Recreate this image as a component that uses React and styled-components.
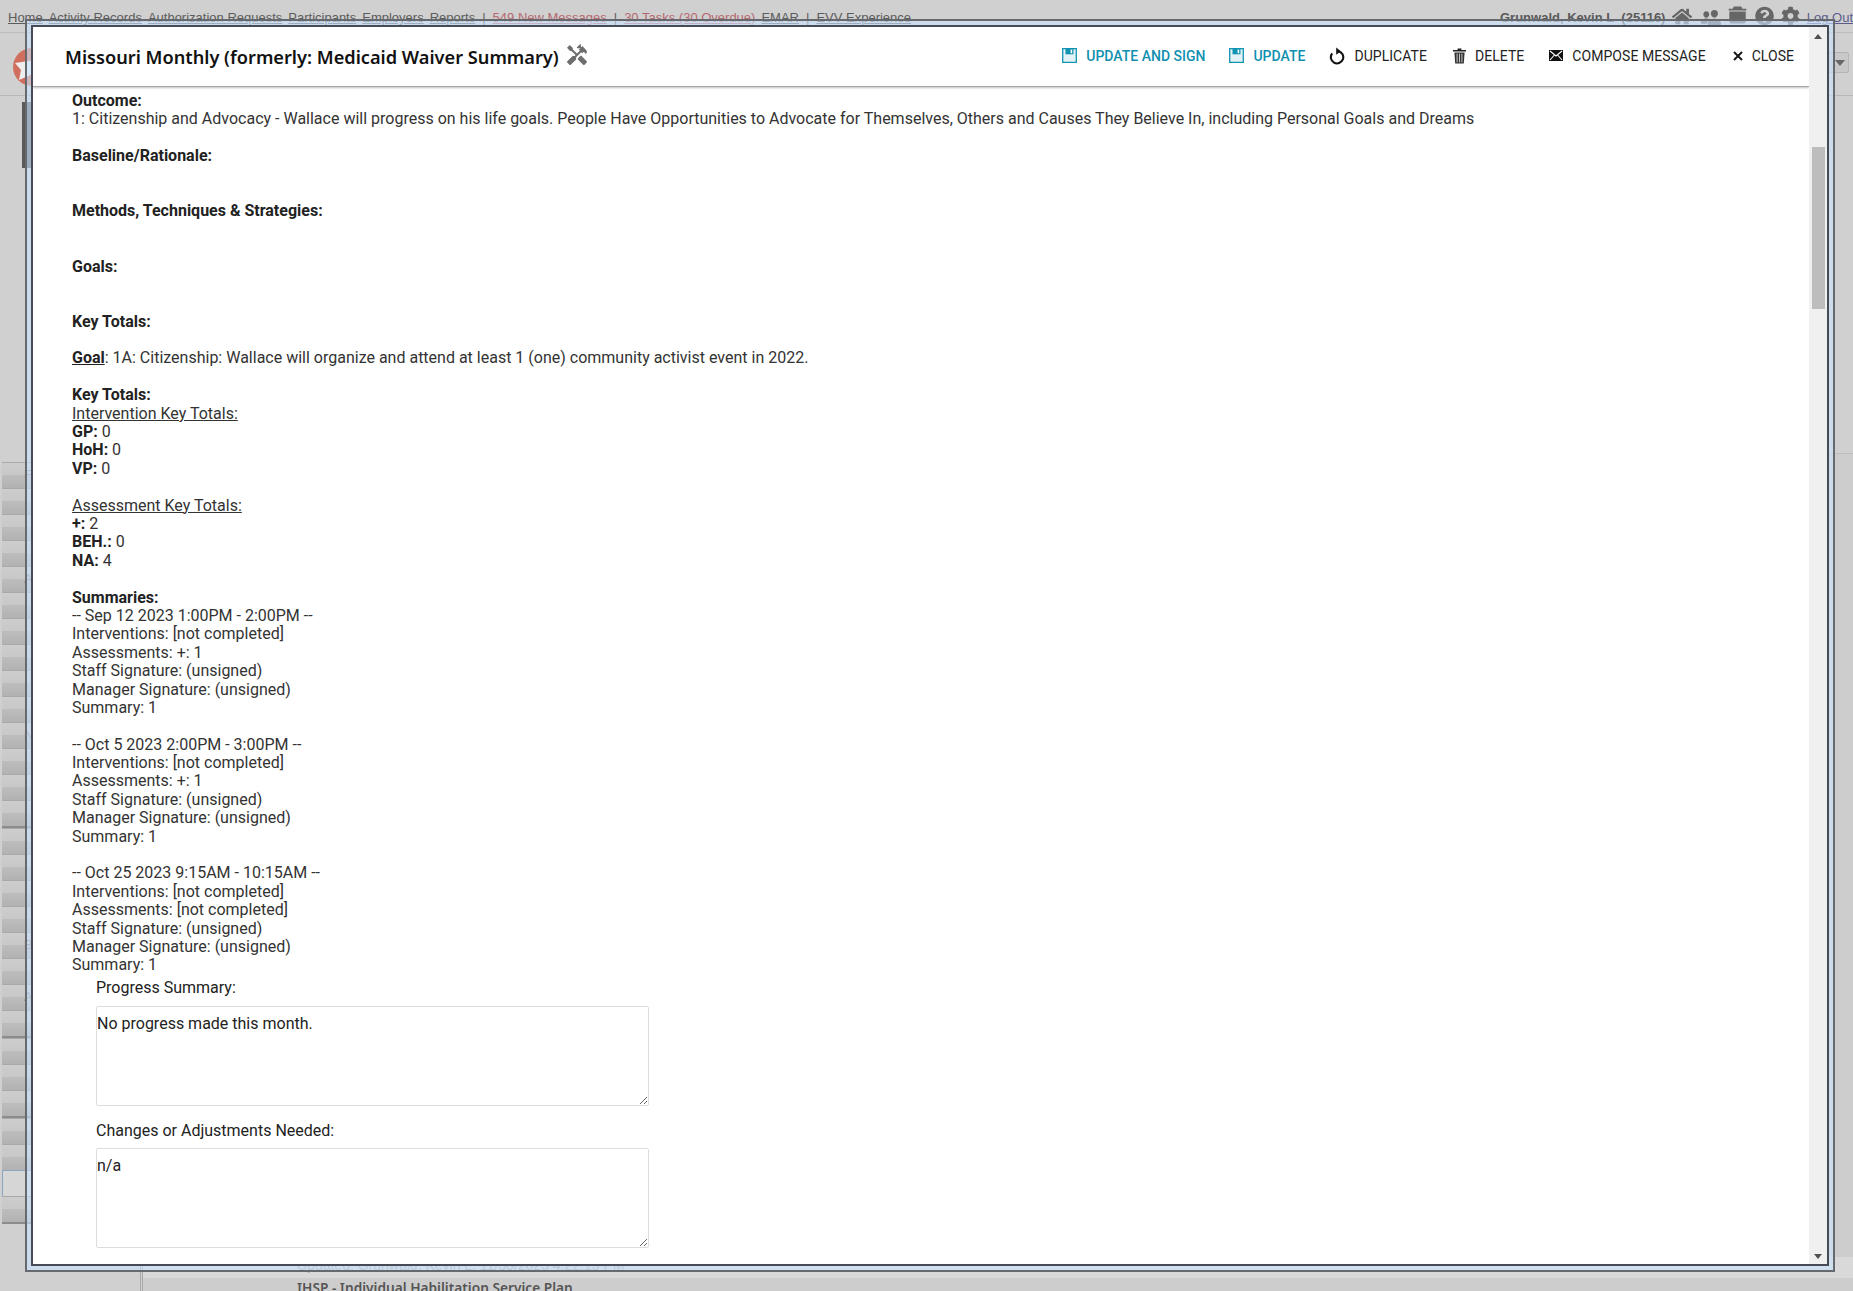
import React from "react";
import styled, { createGlobalStyle } from "styled-components";
import { MdHandyman } from "react-icons/md";
import { FaHome, FaQuestionCircle, FaCog } from "react-icons/fa";
import { IoPeople } from "react-icons/io5";

const GlobalStyle = createGlobalStyle`
  html, body {
    margin: 0;
    height: 100%;
    overflow: hidden;
    background: #d0d0d0;
  }
  * { box-sizing: border-box; }
`;

const SaveIcon = () => (
  <svg width="15" height="15" viewBox="0 0 15 15">
    <path d="M.7.7h13.6v13.6H.7z" fill="#e3f2f6" stroke="#1393b2" strokeWidth="1.3" />
    <path d="M3.5.7h8v5.6h-8z" fill="#1393b2" />
    <path d="M8.6 1.6h1.6v3.6H8.6z" fill="#fff" />
  </svg>
);

const DuplicateIcon = () => (
  <svg width="16" height="18" viewBox="0 0 16 18">
    <path d="M9.4 4.2a6.2 6.2 0 1 1-6.2 2.2" fill="none" stroke="#111" strokeWidth="2.1" />
    <path d="M7.2.6v7.2l4.6-3.6z" fill="#111" />
  </svg>
);

const TrashIcon = () => (
  <svg width="13" height="16" viewBox="0 0 13 16">
    <path d="M4.6.4h3.8v1.5H13v1.5H0V1.9h4.6z" fill="#222" />
    <path d="M1.4 4.4h10.2L10.8 15.6H2.2z" fill="#333" />
    <path d="M4.1 5.6v8.8M6.5 5.6v8.8M8.9 5.6v8.8" stroke="#ddd" strokeWidth=".9" />
  </svg>
);

const MailIcon = () => (
  <svg width="14" height="11" viewBox="0 0 14 11">
    <path d="M0 0h14v11H0z" fill="#111" />
    <path d="M1 1l6 5 6-5M1 10l4.4-5M13 10L8.6 5" fill="none" stroke="#fff" strokeWidth="1.1" />
  </svg>
);

const CloseIcon = () => (
  <svg width="10" height="10" viewBox="0 0 10 10">
    <path d="M1 1l8 8M9 1l-8 8" stroke="#111" strokeWidth="1.8" />
  </svg>
);

const CaseIcon = () => (
  <svg width="20" height="18" viewBox="0 0 20 18">
    <path d="M6 0h8l1 2.4h4.2v2H.8v-2H5z" fill="#666" />
    <path d="M1.4 5.4h17.2v10.4a2 2 0 0 1-2 2H3.4a2 2 0 0 1-2-2z" fill="#666" />
  </svg>
);

const actions = [
  { label: "Update and Sign", icon: <SaveIcon />, accent: true, space: 0 },
  { label: "Update", icon: <SaveIcon />, accent: true, space: 0 },
  { label: "Duplicate", icon: <DuplicateIcon />, space: 0 },
  { label: "Delete", icon: <TrashIcon />, space: 2 },
  { label: "Compose Message", icon: <MailIcon />, space: 1 },
  { label: "Close", icon: <CloseIcon />, space: 3 },
];

const navLinks = ["Home", "Activity Records", "Authorization Requests", "Participants", "Employers", "Reports"];

// rows down the left of the page behind the dialog
const sideRows = [
  "F", "I", "", "", "Ag", "", "", "", "", "", "N", "", "", "", "", "", "", "", "Be", "", "Ac",
  "", "", "", "", "", "", "", "",
];
const heavyRows = [13, 21, 24, 28];

export default function App() {
  return (
    <>
      <GlobalStyle />
      <Page>
        <NavBar>
          <NavLeft>
            {navLinks.map((l) => (
              <NavLink key={l}>{l}</NavLink>
            ))}
            <Sep>|</Sep>
            <NavLink $alert>549 New Messages</NavLink>
            <Sep>|</Sep>
            <NavLink $alert>30 Tasks (30 Overdue)</NavLink>
            <NavLink>EMAR</NavLink>
            <Sep>|</Sep>
            <NavLink>EVV Experience</NavLink>
          </NavLeft>
          <NavRight>
            <UserName>Grunwald, Kevin L&nbsp; (25116)</UserName>
            <FaHome size={21} />
            <IoPeople size={23} />
            <CaseIcon />
            <FaQuestionCircle size={20} />
            <FaCog size={20} />
            <LogOut>Log Out</LogOut>
          </NavRight>
        </NavBar>
        <BrandBar>
          <Logo>
            <svg width="38" height="38" viewBox="0 0 38 38">
              <circle cx="19" cy="19" r="19" fill="#d06f5e" />
              <path d="M2 15l20-3v13l-16 7 2-10z" fill="#eee" />
            </svg>
          </Logo>
          <SelectStub>
            <svg width="10" height="6" viewBox="0 0 10 6">
              <path d="M0 0h10L5 6z" fill="#666" />
            </svg>
          </SelectStub>
        </BrandBar>
        <Lower>
          <Side>
            <TitleBlock />
            <RowList>
              {sideRows.map((label, i) => (
                <SideRow key={i} $heavy={heavyRows.includes(i)} $picked={i === 27}>
                  {label}
                </SideRow>
              ))}
            </RowList>
          </Side>
          <Main>
            <PlanMeta>Updated: Grunwald, Kevin L, 11/30/2023 4:22:13 PM</PlanMeta>
            <PlanTitle>IHSP - Individual Habilitation Service Plan</PlanTitle>
          </Main>
        </Lower>
      </Page>

      <Dialog>
        <DialogInner>
          <DialogMain>
            <DialogHeader>
              <Title>
                Missouri Monthly (formerly: Medicaid Waiver Summary)
                <MdHandyman size={24} color="#6e6e6e" />
              </Title>
              <Actions>
                {actions.map((a) => (
                  <Action key={a.label} $accent={a.accent} $space={a.space}>
                    {a.icon}
                    <span>{a.label}</span>
                  </Action>
                ))}
              </Actions>
            </DialogHeader>
            <DialogBody>
              <Summary>
                <b>Outcome:</b>
                <br />
                1: Citizenship and Advocacy - Wallace will progress on his life goals. People Have Opportunities to
                Advocate for Themselves, Others and Causes They Believe In, including Personal Goals and Dreams
                <br />
                <br />
                <b>Baseline/Rationale:</b>
                <br />
                <br />
                <br />
                <b>Methods, Techniques &amp; Strategies:</b>
                <br />
                <br />
                <br />
                <b>Goals:</b>
                <br />
                <br />
                <br />
                <b>Key Totals:</b>
                <br />
                <br />
                <b>
                  <u>Goal</u>
                </b>
                : 1A: Citizenship: Wallace will organize and attend at least 1 (one) community activist event in 2022.
                <br />
                <br />
                <b>Key Totals:</b>
                <br />
                <u>Intervention Key Totals:</u>
                <br />
                <b>GP:</b> 0
                <br />
                <b>HoH:</b> 0
                <br />
                <b>VP:</b> 0
                <br />
                <br />
                <u>Assessment Key Totals:</u>
                <br />
                <b>+:</b> 2
                <br />
                <b>BEH.:</b> 0
                <br />
                <b>NA:</b> 4
                <br />
                <br />
                <b>Summaries:</b>
                <br />
                -- Sep 12 2023 1:00PM - 2:00PM --
                <br />
                Interventions: [not completed]
                <br />
                Assessments: +: 1
                <br />
                Staff Signature: (unsigned)
                <br />
                Manager Signature: (unsigned)
                <br />
                Summary: 1
                <br />
                <br />
                -- Oct 5 2023 2:00PM - 3:00PM --
                <br />
                Interventions: [not completed]
                <br />
                Assessments: +: 1
                <br />
                Staff Signature: (unsigned)
                <br />
                Manager Signature: (unsigned)
                <br />
                Summary: 1
                <br />
                <br />
                -- Oct 25 2023 9:15AM - 10:15AM --
                <br />
                Interventions: [not completed]
                <br />
                Assessments: [not completed]
                <br />
                Staff Signature: (unsigned)
                <br />
                Manager Signature: (unsigned)
                <br />
                Summary: 1
              </Summary>
              <Field>
                <FieldLabel>Progress Summary:</FieldLabel>
                <FieldInput defaultValue="No progress made this month." />
              </Field>
              <Field>
                <FieldLabel $tight>Changes or Adjustments Needed:</FieldLabel>
                <FieldInput defaultValue="n/a" />
              </Field>
            </DialogBody>
          </DialogMain>
          <ScrollTrack>
            <ScrollArrow viewBox="0 0 10 6">
              <path d="M0 6h10L5 0z" fill="#505050" />
            </ScrollArrow>
            <ScrollThumb />
            <ScrollArrow viewBox="0 0 10 6">
              <path d="M0 0h10L5 6z" fill="#505050" />
            </ScrollArrow>
          </ScrollTrack>
        </DialogInner>
      </Dialog>
    </>
  );
}

const Page = styled.div`
  height: 1291px;
  overflow: hidden;
  display: flex;
  flex-direction: column;
  background: #d0d0d0;
  font-family: "Liberation Sans", Arial, sans-serif;
  color: #5c5c5c;
`;

const NavBar = styled.div`
  height: 33px;
  flex: none;
  display: flex;
  justify-content: space-between;
  padding: 10px 0 0 8px;
  border-bottom: 1px solid #bcbcbc;
  font-size: 13px;
  white-space: nowrap;
  line-height: 16px;
`;

const NavLeft = styled.div`
  display: flex;
  gap: 6px;
`;

const NavLink = styled.span`
  text-decoration: underline;
  color: ${(p) => (p.$alert ? "#b5686e" : "#5c5c5c")};
`;

const Sep = styled.span`
  margin: 0 1px;
`;

const NavRight = styled.div`
  display: flex;
  align-items: flex-start;
  gap: 7px;
  width: 353px;
  flex: none;
  margin-top: -4px;
  color: #666;
  overflow: hidden;
`;

const UserName = styled.span`
  margin-top: 4px;
  font-weight: 700;
  color: #5a5a5a;
`;

const LogOut = styled.span`
  margin-top: 4px;
  text-decoration: underline;
  color: #5c5c8c;
`;

const BrandBar = styled.div`
  height: 63px;
  flex: none;
  display: flex;
  justify-content: space-between;
  align-items: flex-start;
  padding: 15px 4px 0 13px;
  border-bottom: 1px solid #b8b8b8;
`;

const Logo = styled.div`
  width: 38px;
  height: 38px;
`;

const SelectStub = styled.div`
  width: 40px;
  height: 21px;
  margin-top: 4px;
  display: flex;
  align-items: center;
  justify-content: flex-end;
  padding-right: 3px;
  background: #c8c8c8;
  border: 1px solid #b4b4b4;
  border-radius: 2px;
`;

const Lower = styled.div`
  flex: 1;
  display: flex;
`;

const Side = styled.div`
  width: 143px;
  flex: none;
  padding: 6px 0 0 2px;
  border-right: 3px double #a8a8a8;
`;

const TitleBlock = styled.div`
  width: 34px;
  height: 66px;
  margin-left: 20px;
  background: #5a5a5a;
`;

const RowList = styled.div`
  margin-top: 294px;
  width: 40px;
`;

const SideRow = styled.div`
  height: ${(p) => (p.$heavy ? "28px" : "26px")};
  padding: 4px 0 0 22px;
  font-size: 13px;
  color: #8a8a8a;
  overflow: hidden;
  background: ${(p) =>
    p.$picked ? "#d6d6d6" : "linear-gradient(#cdcdcd, #c8c8c8 48%, #bdbdbd 48%, #b2b2b2 100%)"};
  border: ${(p) => (p.$picked ? "1px solid #8aa6c0" : "0")};
  border-top: 1px solid ${(p) => (p.$picked ? "#8aa6c0" : "#a9a9a9")};
  border-bottom: ${(p) => (p.$heavy ? "2px solid #8c8c8c" : "0")};
`;

const Main = styled.div`
  flex: 1;
  margin-top: 357px;
  padding-top: 803px;
  background: #cdcdcd;
  border-top: 1px solid #bdbdbd;
`;

const PlanMeta = styled.div`
  padding: 0 0 5px 154px;
  font-size: 14px;
  color: #a4a4a4;
  line-height: 16px;
  background: #d9d9d9;
`;

const PlanTitle = styled.div`
  margin-top: 1px;
  padding-left: 154px;
  font-family: "Noto Sans", sans-serif;
  font-size: 13.7px;
  font-weight: 600;
  color: #555;
  line-height: 17px;
`;

const Dialog = styled.div`
  position: fixed;
  left: 25px;
  top: 19px;
  width: 1810px;
  height: 1253px;
  padding: 4px;
  background: rgba(203, 228, 255, 0.6);
  border: 2px solid #66696e;
`;

const DialogInner = styled.div`
  width: 100%;
  height: 100%;
  display: flex;
  background: #fff;
  border: 2px solid #474b55;
  overflow: hidden;
`;

const DialogMain = styled.div`
  flex: 1;
  min-width: 0;
  display: flex;
  flex-direction: column;
`;

const DialogHeader = styled.div`
  height: 60px;
  flex: none;
  display: flex;
  align-items: center;
  justify-content: space-between;
  padding: 0 15px 0 32px;
  border-bottom: 1px solid #a8a8a8;
  box-shadow: 0 1px 2px rgba(0, 0, 0, 0.25);
`;

const Title = styled.h1`
  margin: 0;
  display: flex;
  align-items: center;
  gap: 6px;
  font-family: "Noto Sans", sans-serif;
  font-size: 18.2px;
  font-weight: 600;
  color: #111;
  svg {
    margin-top: -4px;
  }
`;

const Actions = styled.div`
  display: flex;
  align-items: center;
  gap: 24px;
  margin-top: -2px;
`;

const Action = styled.div`
  display: flex;
  align-items: center;
  gap: 9px;
  margin-left: ${(p) => p.$space}px;
  font-family: Roboto, sans-serif;
  font-size: 14px;
  font-weight: ${(p) => (p.$accent ? 500 : 400)};
  letter-spacing: ${(p) => (p.$accent ? "0" : "0.05px")};
  text-transform: uppercase;
  color: ${(p) => (p.$accent ? "#0f90b0" : "#222")};
`;

const DialogBody = styled.div`
  flex: 1;
  overflow: hidden;
  padding: 5px 0 0 39px;
  font-family: Roboto, sans-serif;
  font-size: 16px;
  line-height: 1.15;
  color: #333;
`;

const Summary = styled.div`
  white-space: nowrap;
  b {
    color: #222;
  }
`;

const Field = styled.div`
  margin: 4px 0 0 24px;
  & + & {
    margin-top: 16px;
  }
`;

const FieldLabel = styled.div`
  margin-bottom: ${(p) => (p.$tight ? "7px" : "9px")};
  color: #222;
`;

const FieldInput = styled.textarea`
  display: block;
  width: 553px;
  height: 100px;
  padding: 8px 0;
  border: 1px solid #ddd;
  border-radius: 2px;
  font: inherit;
  color: #222;
  outline: none;
`;

const ScrollTrack = styled.div`
  width: 18px;
  flex: none;
  display: flex;
  flex-direction: column;
  align-items: center;
  padding: 7px 0 5px;
  background: #f0f0f0;
`;

const ScrollArrow = styled.svg`
  width: 8px;
  height: 5px;
  flex: none;
`;

const ScrollThumb = styled.div`
  width: 13px;
  height: 162px;
  margin-top: 108px;
  margin-bottom: auto;
  background: #bdbdbd;
`;
